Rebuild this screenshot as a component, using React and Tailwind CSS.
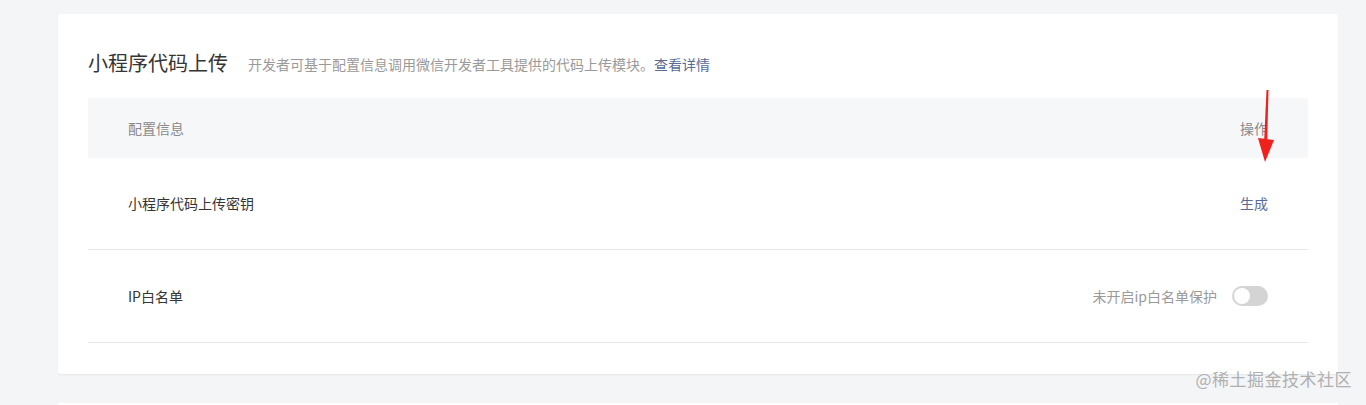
import React, { useState } from "react";

const font = { fontFamily: '"Noto Sans CJK SC", "Noto Sans", sans-serif' };

const App = () => {
  const [ipOn, setIpOn] = useState(false);

  return (
    <div
      className="relative w-full h-[405px] bg-[#f4f5f6] pt-[14px] pl-[58px] pr-[28px] overflow-hidden"
      style={font}
    >
      {/* Main card */}
      <div className="bg-white rounded-[3px] shadow-[0_1px_2px_rgba(0,0,0,0.06)] px-[30px] pt-[36px] pb-[30px] h-[360px]">
        <div className="flex items-center h-[26px]">
          <h2 className="text-[20px] text-[#353535] font-normal leading-none">小程序代码上传</h2>
          <p className="ml-[20px] text-[14px] text-[#9a9a9a] leading-none mt-[2px]">
            开发者可基于配置信息调用微信开发者工具提供的代码上传模块。
            <a className="text-[#576b95] cursor-pointer">查看详情</a>
          </p>
        </div>

        <div className="mt-[22px]">
          {/* Header */}
          <div className="flex items-center justify-between h-[60px] bg-[#f6f7f9] rounded-[2px] pl-[40px] pr-[40px] text-[14px] text-[#8a8a8a]">
            <span>配置信息</span>
            <span>操作</span>
          </div>

          {/* Row 1 */}
          <div className="flex items-center justify-between h-[92px] border-b border-[#e7e7e7] pl-[40px] pr-[40px] text-[14px]">
            <span className="text-[#353535]">小程序代码上传密钥</span>
            <a className="text-[#576b95] cursor-pointer">生成</a>
          </div>

          {/* Row 2 */}
          <div className="flex items-center justify-between h-[93px] border-b border-[#e7e7e7] pl-[40px] pr-[40px] text-[14px]">
            <span className="text-[#353535]">IP白名单</span>
            <div className="flex items-center gap-[15px]">
              <span className="text-[#9a9a9a]">未开启ip白名单保护</span>
              <button
                onClick={() => setIpOn(!ipOn)}
                className={`relative w-[36px] h-[20px] rounded-full ${ipOn ? "bg-[#07c160]" : "bg-[#d4d4d4]"}`}
              >
                <span
                  className={`absolute top-[2px] w-[16px] h-[16px] rounded-full bg-white ${ipOn ? "left-[18px]" : "left-[2px]"}`}
                />
              </button>
            </div>
          </div>
        </div>
      </div>

      {/* Next card peeking in */}
      <div className="bg-white rounded-[3px] mt-[29px] h-[2px]" />

      {/* Red annotation arrow */}
      <svg
        className="absolute left-[1254px] top-[88px]"
        width="24"
        height="76"
        viewBox="0 0 24 76"
      >
        <path d="M14.5 2 L13.2 52 L10.2 52 L12.5 2 Z" fill="#f0201c" />
        <path d="M4 50 L20 52 L11 74 Z" fill="#f0201c" />
      </svg>

      {/* Watermark */}
      <span className="absolute right-[14px] top-[366px] text-[17px] text-[#b0b0b0] tracking-[0.5px]">
        @稀土掘金技术社区
      </span>
    </div>
  );
};

export default App;
